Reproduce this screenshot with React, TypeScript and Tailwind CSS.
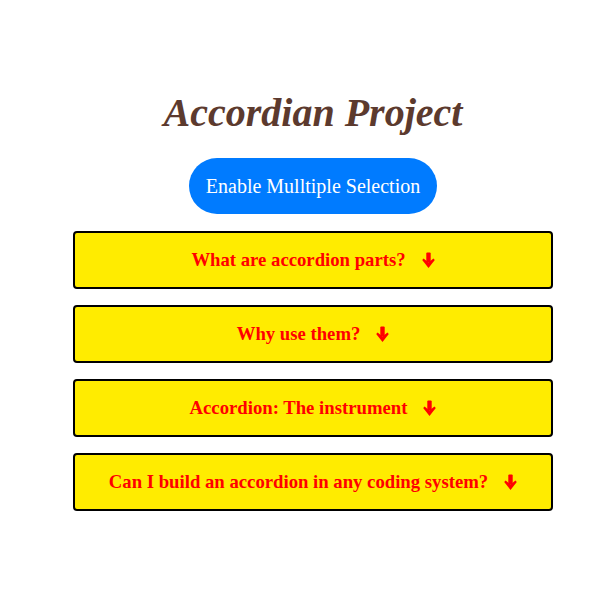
import React from "react";

const items = [
  "What are accordion parts?",
  "Why use them?",
  "Accordion: The instrument",
  "Can I build an accordion in any coding system?",
];

function Arrow() {
  return (
    <svg width="13" height="17" viewBox="0 0 13 17" className="shrink-0" aria-hidden>
      <rect x="4.3" y="0.5" width="4.4" height="10" rx="1" fill="#ff0000" />
      <path d="M0.2 8 L1.6 6.6 L6.5 10.4 L11.4 6.6 L12.8 8 L6.5 16 Z" fill="#ff0000" />
    </svg>
  );
}

export default function App() {
  return (
    <div className="w-[602px] h-[601px] bg-white flex flex-col items-center pt-[90px] pl-[24px]" style={{ fontFamily: '"Liberation Serif", "Times New Roman", serif' }}>
      <h1 className="text-[40px] leading-[46px] font-bold italic text-[#5c3a2e]">Accordian Project</h1>
      <button className="mt-[22px] w-[248px] h-[56px] rounded-full bg-[#007bff] text-white text-[20px]">
        Enable Mulltiple Selection
      </button>
      <div className="mt-[17px] w-[480px] flex flex-col gap-[16px]">
        {items.map((q) => (
          <div key={q} className="h-[58px] border-2 border-black rounded-[4px] bg-[#ffec00] flex items-center justify-center gap-[16px] text-[#ff0000] font-bold text-[18.72px]">
            <span>{q}</span>
            <Arrow />
          </div>
        ))}
      </div>
    </div>
  );
}
